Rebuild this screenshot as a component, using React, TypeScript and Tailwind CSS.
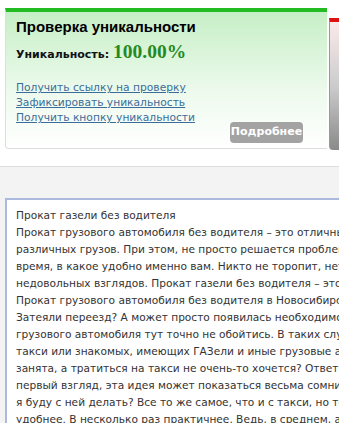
import React from "react";

const lines = [
  "Прокат газели без водителя",
  "Прокат грузового автомобиля без водителя – это отличный способ перевозки",
  "различных грузов. При этом, не просто решается проблема перевозки, а в то",
  "время, в какое удобно именно вам. Никто не торопит, нет никаких",
  "недовольных взглядов. Прокат газели без водителя – это удобно и выгодно.",
  "Прокат грузового автомобиля без водителя в Новосибирске",
  "Затеяли переезд? А может просто появилась необходимость перевезти",
  "грузового автомобиля тут точно не обойтись. В таких случаях обычно",
  "такси или знакомых, имеющих ГАЗели и иные грузовые автомобили.",
  "занята, а тратиться на такси не очень-то хочется? Ответ прост –",
  "первый взгляд, эта идея может показаться весьма сомнительной: зачем",
  "я буду с ней делать? Все то же самое, что и с такси, но только",
  "удобнее. В несколько раз практичнее. Ведь, в среднем, аренда",
];

export default function App() {
  return (
    <div className="w-[339px] h-[423px] overflow-hidden bg-[#f3f3f3] relative" style={{ fontFamily: "'DejaVu Sans', sans-serif" }}>
      <div className="h-[167px] bg-white border-b border-[#dddddd] flex items-start pt-[8px] pl-[5px] gap-[2px]">
        <div className="w-[326px] h-[141px] border-t-4 border-t-[#22bb22] border-l border-b border-[#dddddd] rounded-bl-[4px] bg-gradient-to-b from-[#c6efc6] via-[#eefaee] via-60% to-white relative">
          <div className="pl-[10px] pt-[5px]">
            <div className="text-[15px] font-bold text-black leading-[20px]" style={{ fontFamily: "'Liberation Sans', sans-serif" }}>Проверка уникальности</div>
            <div className="mt-[3px] flex items-baseline leading-[24px]">
              <span className="text-[11px] font-bold text-[#111]">Уникальность:</span>
              <span className="ml-[4px] text-[19.5px] font-bold text-[#238a23]" style={{ fontFamily: "'Liberation Serif', serif" }}>100.00%</span>
            </div>
            <div className="mt-[13px] flex flex-col text-[10.7px] leading-[15px] text-[#3a6d99]">
              <a className="underline w-fit">Получить ссылку на проверку</a>
              <a className="underline w-fit">Зафиксировать уникальность</a>
              <a className="underline w-fit">Получить кнопку уникальности</a>
            </div>
          </div>
          <div className="absolute left-[224px] top-[110px] w-[73px] h-[21px] rounded-[4px] bg-[#a3a3a3] text-white text-[11px] font-bold flex items-center justify-center">Подробнее</div>
        </div>
        <div className="mt-[10px] w-[10px] h-[132px] border-t-4 border-t-[#dd1111] border-l border-[#999] rounded-bl-[4px] bg-gradient-to-b from-[#fbeaea] via-[#cccccc] to-[#8a8a8a]"></div>
      </div>
      <div className="pt-[31px] pl-[5px]">
        <div className="w-[360px] h-[230px] bg-white border-2 border-[#aab9dd] pt-[7px] pl-[9px] overflow-hidden">
          {lines.map((l, i) => (
            <div key={i} className="whitespace-nowrap text-[10.6px] leading-[17px] text-[#333]">{l}</div>
          ))}
        </div>
      </div>
    </div>
  );
}
